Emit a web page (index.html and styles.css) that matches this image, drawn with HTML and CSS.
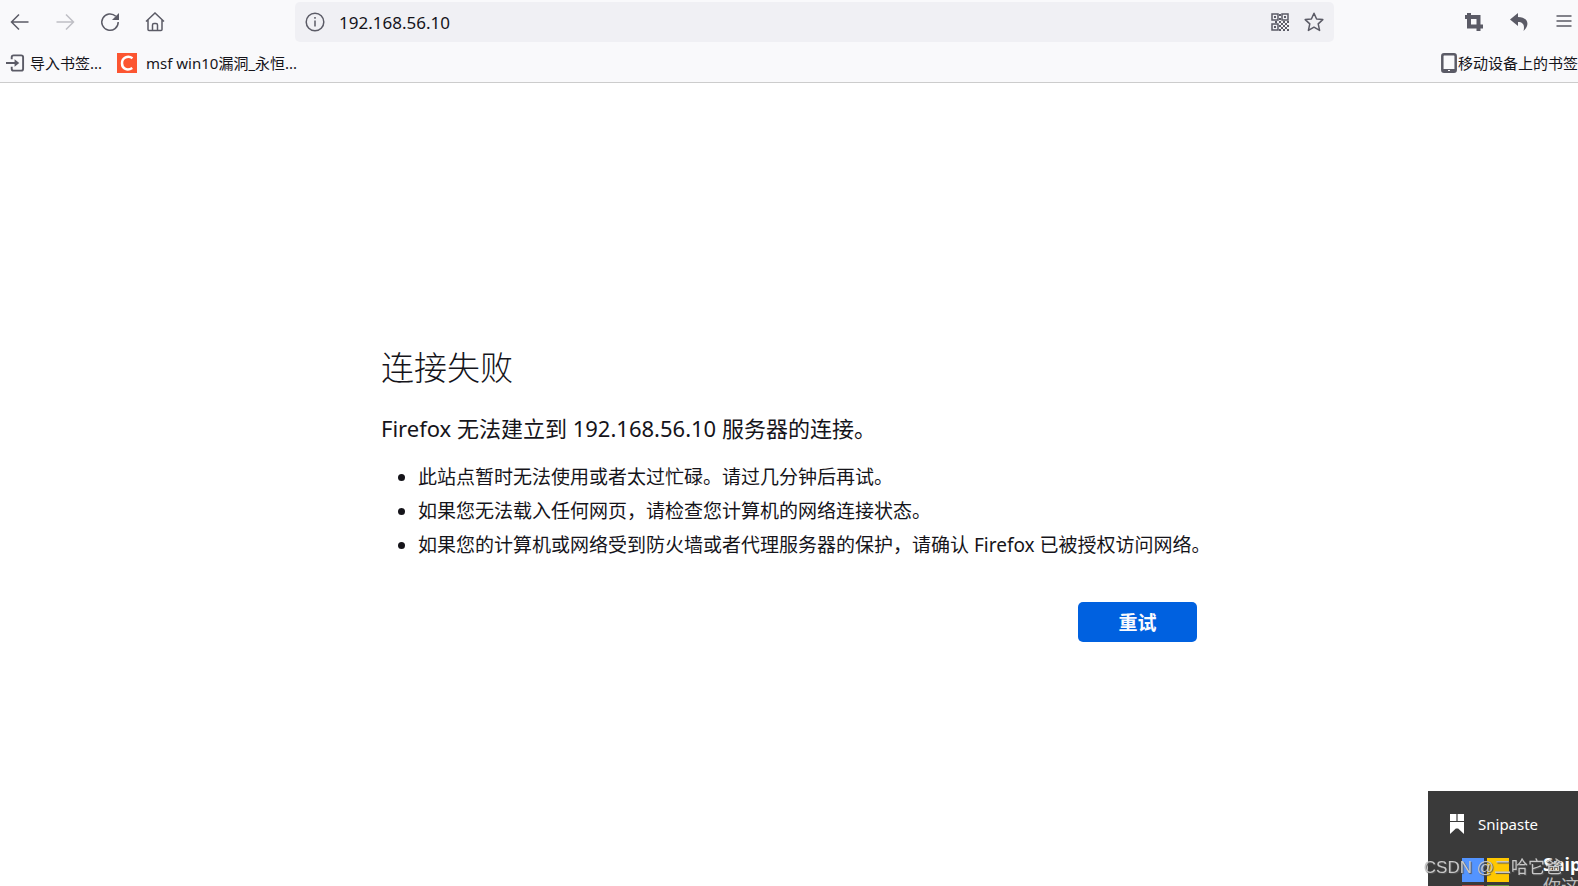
FILE: index.html
```html
<!DOCTYPE html>
<html lang="zh-CN">
<head>
<meta charset="utf-8">
<title>连接失败</title>
<link rel="stylesheet" href="styles.css">
</head>
<body>
<header class="browser">
  <div class="toolbar">
    <nav class="nav" aria-label="导航">
      <button class="tool" type="button" aria-label="后退"><svg class="icon" viewBox="0 0 20 20"><path d="M18.500 10H2M9 2.500 1.500 10 9 17.500" /></svg></button>
      <button class="tool" type="button" aria-label="前进" disabled><svg class="icon" viewBox="0 0 20 20"><path d="M1.500 10H18M11 2.500 18.500 10 11 17.500" /></svg></button>
      <button class="tool" type="button" aria-label="刷新"><svg class="icon" viewBox="0 0 20 20"><path d="M15.800 4.300A8.200 8.200 0 1 0 18.200 10" /><path class="solid" d="M19 1v7h-7z" /></svg></button>
      <button class="tool" type="button" aria-label="主页"><svg class="icon" viewBox="0 0 20 20"><path d="M1 9.500 10 1l9 8.500M3 8v9.500q0 1 1 1h12q1 0 1-1V8M7.500 18v-5q0-1.500 1.500-1.500h2q1.500 0 1.500 1.500v5" /></svg></button>
    </nav>
    <form class="urlbar">
      <svg class="icon" viewBox="0 0 20 20"><circle cx="10" cy="10" r="8.800" /><path d="M10 8.500v6M10 5v1.800" /></svg>
      <input class="address" type="text" value="192.168.56.10" aria-label="地址">
      <button class="tool" type="button" aria-label="二维码"><svg class="icon" viewBox="0 0 20 20"><path d="M2 2h6v6H2zM12 2h6v6h-6zM2 12h6v6H2z" /><path class="solid" d="M4 4h2v2H4zM14 4h2v2h-2zM4 14h2v2H4zM9 2h2v2H9zM9 6h2v2H9zM5 9h2v2H5zM9 9h2v2H9zM13 9h2v2h-2zM17 9h2v2h-2zM11 11h2v2h-2zM15 11h2v2h-2zM9 13h2v2H9zM13 13h2v2h-2zM17 13h2v2h-2zM11 15h2v2h-2zM15 15h2v2h-2zM9 17h2v2H9zM13 17h2v2h-2zM17 17h2v2h-2z" /></svg></button>
      <button class="tool" type="button" aria-label="收藏"><svg class="icon" viewBox="0 0 20 20"><path stroke-linejoin="round" d="m10 1.200 2.600 5.800 6.200.6-4.600 4.300 1.400 6.500L10 15.200l-5.600 3.200 1.400-6.500L1.200 7.600 7.400 7z" /></svg></button>
    </form>
    <div class="actions">
      <button class="tool" type="button" aria-label="截图"><svg class="icon" viewBox="0 0 20 20"><path class="heavy" d="M5 1v13.500h14M1 5h13.500v14" /></svg></button>
      <button class="tool" type="button" aria-label="撤销"><svg class="icon" viewBox="0 0 20 20"><path class="solid" d="M9 1 1 7.500 9 14v-4c5 0 7 3 5.500 9C22 12 18 5 9 5z" /></svg></button>
      <button class="tool" type="button" aria-label="菜单"><svg class="icon" viewBox="0 0 20 20"><path d="M2.500 4h15M2.500 9h15M2.500 14h15" /></svg></button>
    </div>
  </div>
  <div class="bookmarks">
    <a class="bookmark" href="#"><svg class="icon small" viewBox="0 0 20 20"><path class="medium" d="M6 6V4q0-2 2-2h8q2 0 2 2v12q0 2-2 2H8q-2 0-2-2v-2M0 10h10" /><path class="solid" d="m9 6 5 4-5 4z" /></svg>导入书签...</a>
    <a class="bookmark site" href="#"><svg class="favicon" viewBox="0 0 20 20"><path class="orange" d="M0 0h20v20H0z" /><path class="letter" d="M15.500 5.200C11 2.200 5 4.500 5 10.300s5.500 7.700 10.300 4.700" /></svg>msf win10漏洞_永恒...</a>
    <a class="bookmark mobile" href="#"><svg class="phone" viewBox="0 0 16 20"><path d="M3 1.300h10q1.700 0 1.700 1.700v14q0 1.700-1.700 1.700H3q-1.700 0-1.700-1.700V3q0-1.700 1.700-1.700z" /><path class="solid" d="M2 16h12v3H2z" /><path class="dot" d="M7 17h2v1H7z" /></svg>移动设备上的书签</a>
  </div>
</header>
<main class="page">
  <section class="error">
    <h1 class="title">连接失败</h1>
    <p class="lead">Firefox 无法建立到 192.168.56.10 服务器的连接。</p>
    <ul class="hints">
      <li>此站点暂时无法使用或者太过忙碌。请过几分钟后再试。</li>
      <li>如果您无法载入任何网页，请检查您计算机的网络连接状态。</li>
      <li>如果您的计算机或网络受到防火墙或者代理服务器的保护，请确认 Firefox 已被授权访问网络。</li>
    </ul>
    <button class="retry" type="button">重试</button>
  </section>
</main>
<aside class="toast">
  <div class="toast-head"><svg class="ribbon" viewBox="0 0 14 20"><path d="M0 0h6.400v7H0zM7.600 0H14v7H7.600zM0 8h6.400v6L0 20zM7.600 8H14v12l-6.400-6zM6 8h2v6.500H6z" /></svg>Snipaste</div>
  <div class="toast-body">
    <div class="tiles"><i class="tile blue"></i><i class="tile yellow"></i><i class="tile red"></i><i class="tile green"></i></div>
    <div class="toast-text"><strong>Snipaste</strong><span>你这</span></div>
  </div>
  <span class="watermark">CSDN @二哈它爸</span>
</aside>
</body>
</html>
```
FILE: styles.css
```css
* { box-sizing: border-box; }
body {
  margin: 0;
  min-height: 100vh;
  display: flex;
  flex-direction: column;
  overflow: hidden;
  background: #fff;
  color: #15141a;
  font-family: "Noto Sans", "Noto Sans CJK SC", sans-serif;
}
.browser { background: #f9f9fb; border-bottom: 1px solid #ccc; }
.toolbar { display: flex; align-items: center; height: 44px; padding: 2px 4px 2px 10px; }
.nav { display: flex; gap: 25px; width: 285px; }
.tool { display: block; padding: 0; border: 0; background: none; color: #5b5b66; }
.tool:disabled { color: #bfbfc5; }
.icon { display: block; flex: none; width: 20px; height: 20px; fill: none; stroke: currentColor; stroke-width: 1.5; }
.solid { fill: currentColor; stroke: none; }
.heavy { stroke-width: 4; }
.medium { stroke-width: 2; }
.urlbar {
  display: flex;
  flex: 1;
  align-items: center;
  gap: 14px;
  height: 40px;
  padding: 0 10px;
  border-radius: 5px;
  background: #f0f0f4;
  color: #5b5b66;
}
.address { flex: 1; min-width: 0; padding: 0; border: 0; outline: 0; background: none; color: #15141a; font: 17px "Noto Sans", sans-serif; }
.actions { display: flex; justify-content: space-between; width: 240px; padding-left: 130px; }
.bookmarks { display: flex; align-items: center; height: 38px; padding-left: 6px; font-size: 15px; line-height: 20px; }
.bookmark { display: flex; align-items: center; color: #15141a; text-decoration: none; white-space: nowrap; }
.bookmark .icon { margin-right: 5px; color: #5b5b66; }
.small { width: 19px; }
.site { margin-left: 15px; }
.favicon { width: 20px; height: 20px; margin-right: 9px; }
.orange { fill: #fc5531; }
.letter { fill: none; stroke: #fff; stroke-width: 2.5; }
.mobile { margin-left: auto; }
.phone { width: 16px; height: 20px; margin-right: 1px; color: #5b5b66; fill: none; stroke: currentColor; stroke-width: 2.5; }
.phone .solid { stroke: none; }
.phone .dot { fill: #fff; stroke: none; }
.page { flex: 1; display: flex; align-items: center; justify-content: center; padding-top: 17px; }
.error { display: flex; flex-direction: column; width: 816px; max-width: 100%; }
.title { margin: 0 0 19px; font-size: 33px; font-weight: 300; line-height: 48px; }
.lead { margin: 0 0 15px; font-size: 22px; line-height: 34px; }
.hints { margin: 0; padding-left: 37px; font-size: 19px; line-height: 34px; white-space: nowrap; }
.retry { align-self: flex-end; width: 119px; height: 40px; margin-top: 40px; border: 0; border-radius: 5px; background: #0061e0; color: #fbfbfe; font: bold 19px "Noto Sans", "Noto Sans CJK SC", sans-serif; }
.toast { position: fixed; right: 0; bottom: 0; width: 150px; height: 95px; padding: 20px 0 0 22px; background: #3a3a3a; color: #fff; }
.toast-head { display: flex; align-items: center; gap: 14px; height: 26px; font-size: 15px; white-space: nowrap; }
.ribbon { width: 14px; height: 20px; fill: #fff; }
.toast-body { display: flex; gap: 34px; height: 49px; padding: 16px 0 0 12px; overflow: hidden; }
.tiles { display: grid; flex: none; grid-template-columns: 22px 22px; grid-template-rows: 24px 24px; gap: 3px; padding-top: 5px; }
.blue { background: #5394ff; }
.yellow { background: #ffc800; }
.red { background: #b54a46; }
.green { background: #6a9c3c; }
.toast-text { display: flex; flex-direction: column; font-size: 18px; line-height: 22px; color: #bbb; }
.toast-text strong { color: #fff; }
.watermark { position: absolute; right: 16px; bottom: 6px; color: #c8c8c8; font: 17px/24px "Liberation Sans", "Noto Sans CJK SC", sans-serif; white-space: nowrap; text-shadow: 1px 1px 1px #555; }
```
